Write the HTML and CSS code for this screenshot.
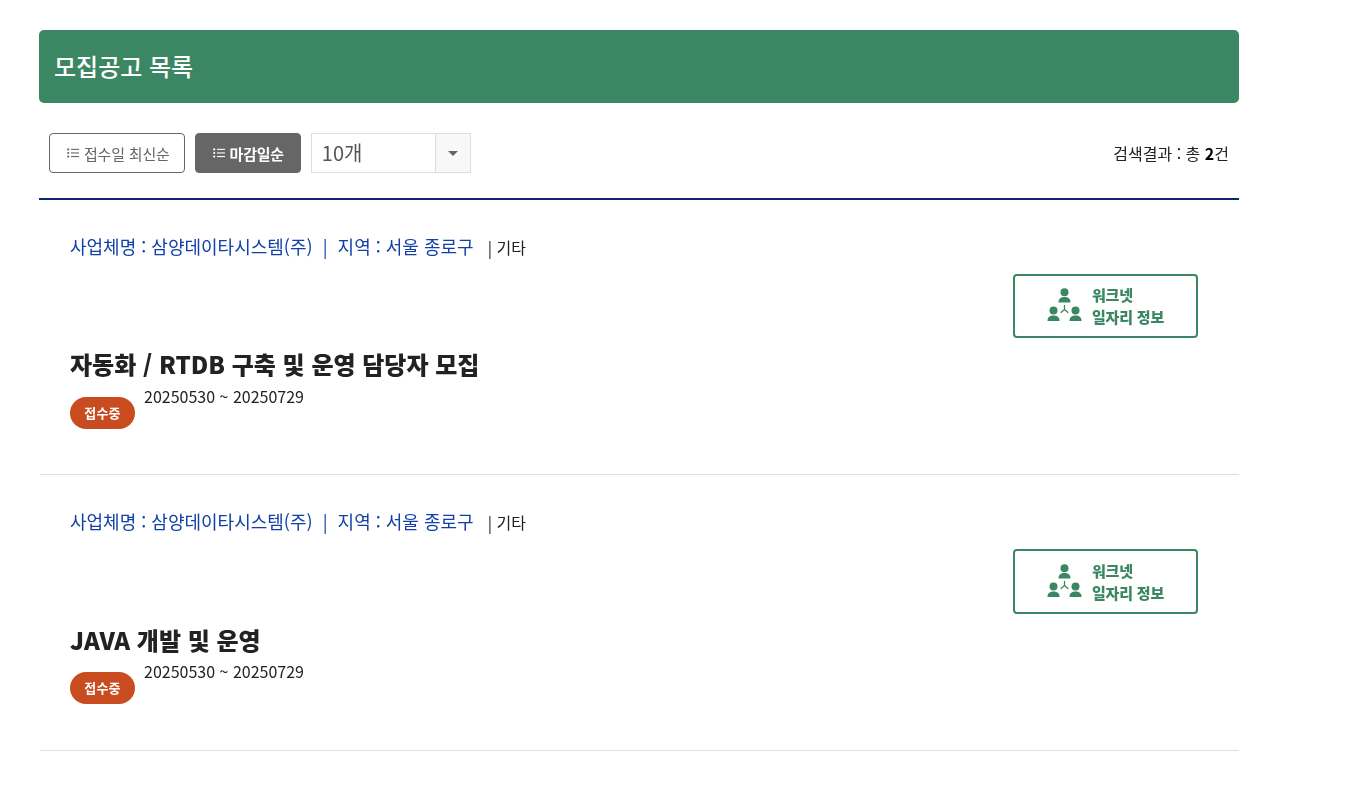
FILE: index.html
```html
<!DOCTYPE html>
<html lang="ko">
<head>
    <meta charset="UTF-8">
    <meta name="viewport" content="width=device-width, initial-scale=1.0">
    <title>모집공고 목록</title>
    <link rel="stylesheet" href="styles.css">
</head>
<body>
    <svg class="defs" width="0" height="0" aria-hidden="true">
        <symbol id="ico-list" viewBox="0 0 12 10">
            <circle cx="1.2" cy="1.4" r="1.1"/>
            <circle cx="1.2" cy="5" r="1.1"/>
            <circle cx="1.2" cy="8.6" r="1.1"/>
            <rect x="4" y="0.8" width="8" height="1.1"/>
            <rect x="4" y="4.4" width="8" height="1.1"/>
            <rect x="4" y="8" width="8" height="1.1"/>
        </symbol>
        <symbol id="ico-people" viewBox="0 0 35 34">
            <circle cx="17.500" cy="4.300" r="4"/>
            <path d="M11.500 14.500c0-4 2.500-5.400 6-5.400s6 1.400 6 5.400z"/>
            <circle cx="6.500" cy="22.500" r="4"/>
            <path d="M.5 33c0-4 2.500-5.400 6-5.400s6 1.400 6 5.400z"/>
            <circle cx="28.500" cy="22.500" r="4"/>
            <path d="M22.500 33c0-4 2.500-5.400 6-5.400s6 1.400 6 5.400z"/>
            <path d="M17.500 17v4.500l-3.800 3.300M17.500 21.500l3.800 3.300" fill="none" stroke="currentColor" stroke-width="1.300"/>
        </symbol>
    </svg>

    <div class="container">
        <h1 class="page-title">모집공고 목록</h1>

        <div class="toolbar">
            <button class="sort-btn"><svg class="ico-list"><use href="#ico-list"/></svg>접수일 최신순</button>
            <button class="sort-btn active"><svg class="ico-list"><use href="#ico-list"/></svg>마감일순</button>
            <div class="select-box">
                <span class="select-value">10개</span>
                <span class="select-arrow"></span>
            </div>
            <p class="total">검색결과 : 총 <b>2</b>건</p>
        </div>

        <ul class="job-list">
            <li class="job-item">
                <p class="job-meta"><span class="blue">사업체명 : 삼양데이타시스템(주) &nbsp;|&nbsp; 지역 : 서울 종로구</span><span class="etc">| 기타</span></p>
                <div class="job-link">
                    <a class="worknet-btn" href="#">
                        <svg class="ico-people"><use href="#ico-people"/></svg>
                        <span>워크넷<br>일자리 정보</span>
                    </a>
                </div>
                <h2 class="job-title">자동화 / RTDB 구축 및 운영 담당자 모집</h2>
                <div class="job-status">
                    <span class="badge">접수중</span>
                    <span class="job-date">20250530 ~ 20250729</span>
                </div>
            </li>
            <li class="job-item">
                <p class="job-meta"><span class="blue">사업체명 : 삼양데이타시스템(주) &nbsp;|&nbsp; 지역 : 서울 종로구</span><span class="etc">| 기타</span></p>
                <div class="job-link">
                    <a class="worknet-btn" href="#">
                        <svg class="ico-people"><use href="#ico-people"/></svg>
                        <span>워크넷<br>일자리 정보</span>
                    </a>
                </div>
                <h2 class="job-title">JAVA 개발 및 운영</h2>
                <div class="job-status">
                    <span class="badge">접수중</span>
                    <span class="job-date">20250530 ~ 20250729</span>
                </div>
            </li>
        </ul>
    </div>
</body>
</html>
```

FILE: styles.css
```css
body {
    font-family: "Noto Sans CJK KR", "Noto Sans", sans-serif;
    margin: 0;
    padding: 0;
    background-color: #fff;
    color: #222;
}

.defs {
    position: absolute;
}

.container {
    width: 1200px;
    margin-left: 39px;
    padding-top: 30px;
    will-change: opacity;
}

.page-title {
    margin: 0;
    height: 73px;
    line-height: 71px;
    padding-left: 15px;
    font-size: 24px;
    font-weight: 500;
    color: #fff;
    background-color: #3b8763;
    border-radius: 5px;
}

.toolbar {
    display: flex;
    align-items: center;
    height: 40px;
    margin-top: 30px;
    padding: 0 10px;
    gap: 10px;
}

.sort-btn {
    display: flex;
    align-items: center;
    height: 40px;
    padding: 0 14px 0 17px;
    font-family: inherit;
    font-size: 15px;
    letter-spacing: -0.2px;
    color: #666;
    background-color: #fff;
    border: 1px solid #666;
    border-radius: 4px;
}

.sort-btn.active {
    padding-right: 16px;
    color: #fff;
    font-weight: 700;
    letter-spacing: -0.25px;
    background-color: #666;
}

.ico-list {
    width: 12px;
    height: 10px;
    margin-right: 5px;
    fill: currentColor;
}

.select-box {
    display: flex;
    width: 160px;
    height: 40px;
    box-sizing: border-box;
    border: 1px solid #ddd;
}

.select-value {
    flex: 1;
    padding-left: 10px;
    font-size: 20px;
    line-height: 38px;
    color: #555;
}

.select-arrow {
    position: relative;
    width: 34px;
    background-color: #f8f8f8;
    border-left: 1px solid #ddd;
}

.select-arrow::after {
    content: "";
    position: absolute;
    left: 12px;
    top: 17px;
    border: 5px solid transparent;
    border-top-color: #666;
    border-bottom-width: 0;
}

.total {
    margin: 0 0 0 auto;
    font-size: 16px;
    color: #222;
}

.total b {
    color: #000;
}

.job-list {
    list-style: none;
    margin: 25px 0 0;
    padding: 0;
    border-top: 2px solid #0c2577;
}

.job-item {
    height: 275px;
    box-sizing: border-box;
    margin-left: 1px;
    padding: 33px 41px 0 30px;
    border-bottom: 1px solid #ddd;
}

.job-item + .job-item {
    height: 276px;
}

.job-meta {
    margin: 0;
    font-size: 18px;
    line-height: 26px;
}

.blue {
    color: #1240a8;
}

.etc {
    margin-left: 14px;
    font-size: 16px;
    color: #222;
}

.job-link {
    display: flex;
    justify-content: flex-end;
    margin-top: 14px;
}

.worknet-btn {
    display: flex;
    align-items: center;
    width: 185px;
    height: 64px;
    box-sizing: border-box;
    padding-left: 32px;
    font-size: 15px;
    font-weight: 900;
    line-height: 22px;
    letter-spacing: -0.2px;
    color: #3b8763;
    text-decoration: none;
    border: 2px solid #3b8763;
    border-radius: 4px;
}

.job-item + .job-item .worknet-btn {
    height: 65px;
}

.ico-people {
    width: 35px;
    height: 34px;
    margin: -2px 10px 0 0;
    fill: currentColor;
}

.job-title {
    margin: 8px 0 0;
    font-size: 24px;
    font-weight: 900;
    line-height: 36px;
    color: #222;
}

.job-status {
    display: flex;
    align-items: flex-start;
    gap: 9px;
    margin-top: 10px;
}

.job-item + .job-item .job-status {
    margin-top: 9px;
}

.badge {
    width: 65px;
    height: 32px;
    line-height: 32px;
    margin-top: 5px;
    text-align: center;
    font-size: 13px;
    font-weight: 700;
    letter-spacing: 0.2px;
    color: #fff;
    background-color: #c94c21;
    border-radius: 16px;
}

.job-date {
    font-size: 16px;
    line-height: 24px;
    margin-top: -8px;
    color: #222;
}
```
